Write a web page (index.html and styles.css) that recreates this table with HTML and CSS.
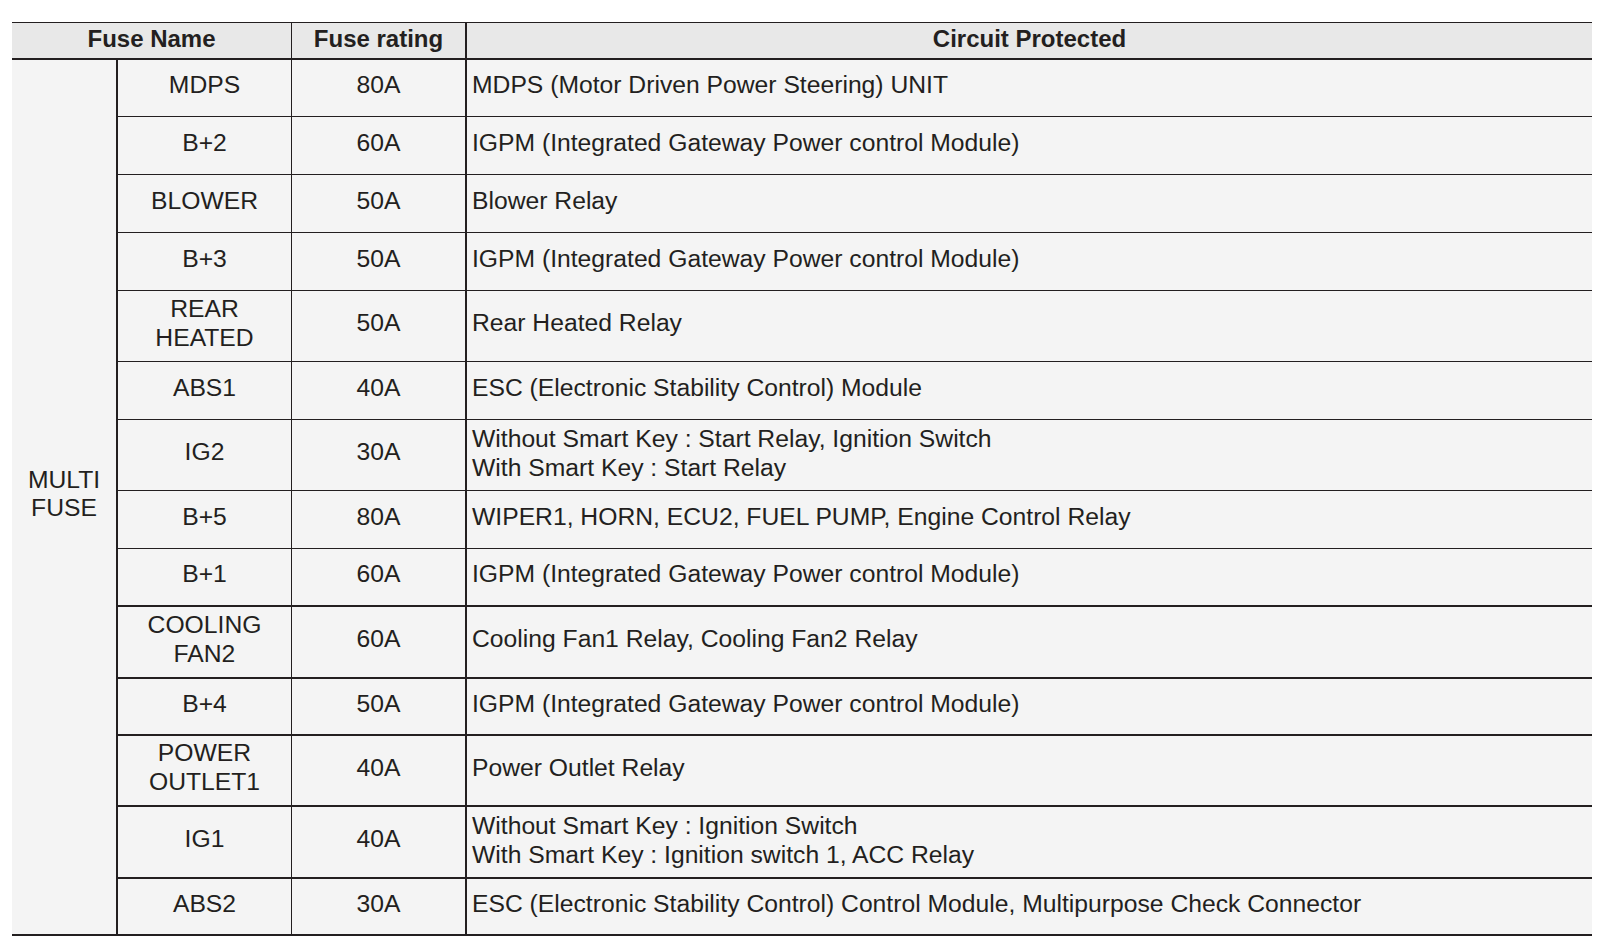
FILE: index.html
```html
<!DOCTYPE html>
<html lang="en">
<head>
<meta charset="utf-8">
<title>Multi Fuse</title>
<link rel="stylesheet" href="styles.css">
</head>
<body>
<div class="fuse-table">
  <div class="hd hd-name">Fuse Name</div>
  <div class="hd hd-rating">Fuse rating</div>
  <div class="hd hd-circuit">Circuit Protected</div>

  <div class="group">MULTI<br>FUSE</div>

  <div class="c name">MDPS</div><div class="c rating">80A</div><div class="c circuit">MDPS (Motor Driven Power Steering) UNIT</div>
  <div class="c name">B+2</div><div class="c rating">60A</div><div class="c circuit">IGPM (Integrated Gateway Power control Module)</div>
  <div class="c name">BLOWER</div><div class="c rating">50A</div><div class="c circuit">Blower Relay</div>
  <div class="c name">B+3</div><div class="c rating">50A</div><div class="c circuit">IGPM (Integrated Gateway Power control Module)</div>
  <div class="c name">REAR<br>HEATED</div><div class="c rating">50A</div><div class="c circuit">Rear Heated Relay</div>
  <div class="c name">ABS1</div><div class="c rating">40A</div><div class="c circuit">ESC (Electronic Stability Control) Module</div>
  <div class="c name">IG2</div><div class="c rating">30A</div><div class="c circuit two">Without Smart Key : Start Relay, Ignition Switch<br>With Smart Key : Start Relay</div>
  <div class="c name">B+5</div><div class="c rating">80A</div><div class="c circuit">WIPER1, HORN, ECU2, FUEL PUMP, Engine Control Relay</div>
  <div class="c name thick">B+1</div><div class="c rating thick">60A</div><div class="c circuit thick">IGPM (Integrated Gateway Power control Module)</div>
  <div class="c name thick">COOLING<br>FAN2</div><div class="c rating thick">60A</div><div class="c circuit thick">Cooling Fan1 Relay, Cooling Fan2 Relay</div>
  <div class="c name thick">B+4</div><div class="c rating thick">50A</div><div class="c circuit thick">IGPM (Integrated Gateway Power control Module)</div>
  <div class="c name thick">POWER<br>OUTLET1</div><div class="c rating thick">40A</div><div class="c circuit thick">Power Outlet Relay</div>
  <div class="c name thick">IG1</div><div class="c rating thick">40A</div><div class="c circuit thick two">Without Smart Key : Ignition Switch<br>With Smart Key : Ignition switch 1, ACC Relay</div>
  <div class="c name thick">ABS2</div><div class="c rating thick">30A</div><div class="c circuit thick">ESC (Electronic Stability Control) Control Module, Multipurpose Check Connector</div>
</div>
</body>
</html>
```

FILE: styles.css
```css
html, body {
  margin: 0;
  padding: 0;
  background: #ffffff;
}

body {
  font-family: "Liberation Sans", Arial, sans-serif;
  color: #231f20;
}

.fuse-table {
  margin: 22px 0 0 12px;
  width: 1580px;
  display: grid;
  grid-template-columns: 106px 174px 175px 1fr;
  grid-template-rows: 37px 57px 58px 58px 58px 71px 58px 71px 58px 58px 72px 57px 71px 72px 57px;
  border-top: 1px solid #231f20;
  font-size: 24.7px;
  line-height: 29px;
}

.fuse-table > div {
  box-sizing: border-box;
  display: flex;
  align-items: center;
  background: #f4f4f4;
  border-bottom: 1px solid #231f20;
}

.hd {
  background: #e8e8e8 !important;
  border-bottom: 2px solid #231f20 !important;
  justify-content: center;
  font-weight: bold;
  font-size: 24px;
  padding-bottom: 5px;
}

.hd-name {
  grid-column: 1 / 3;
  border-right: 1px solid #231f20;
}

.hd-rating {
  grid-column: 3;
  border-right: 2px solid #231f20;
}

.hd-circuit {
  grid-column: 4;
}

.group {
  grid-column: 1;
  grid-row: 2 / span 14;
  justify-content: center;
  text-align: center;
  line-height: 28px;
  border-right: 2px solid #231f20;
  border-bottom: 2px solid #231f20 !important;
  padding-bottom: 6px;
}

.c {
  text-align: center;
  justify-content: center;
  padding-bottom: 7px;
}

.name {
  border-right: 1px solid #231f20;
}

.rating {
  border-right: 2px solid #231f20;
}

.circuit {
  text-align: left;
  justify-content: flex-start !important;
  padding-left: 5px;
}

.circuit.two {
  padding-bottom: 5px;
  padding-top: 0;
}

.thick {
  border-bottom-width: 2px !important;
}
```
